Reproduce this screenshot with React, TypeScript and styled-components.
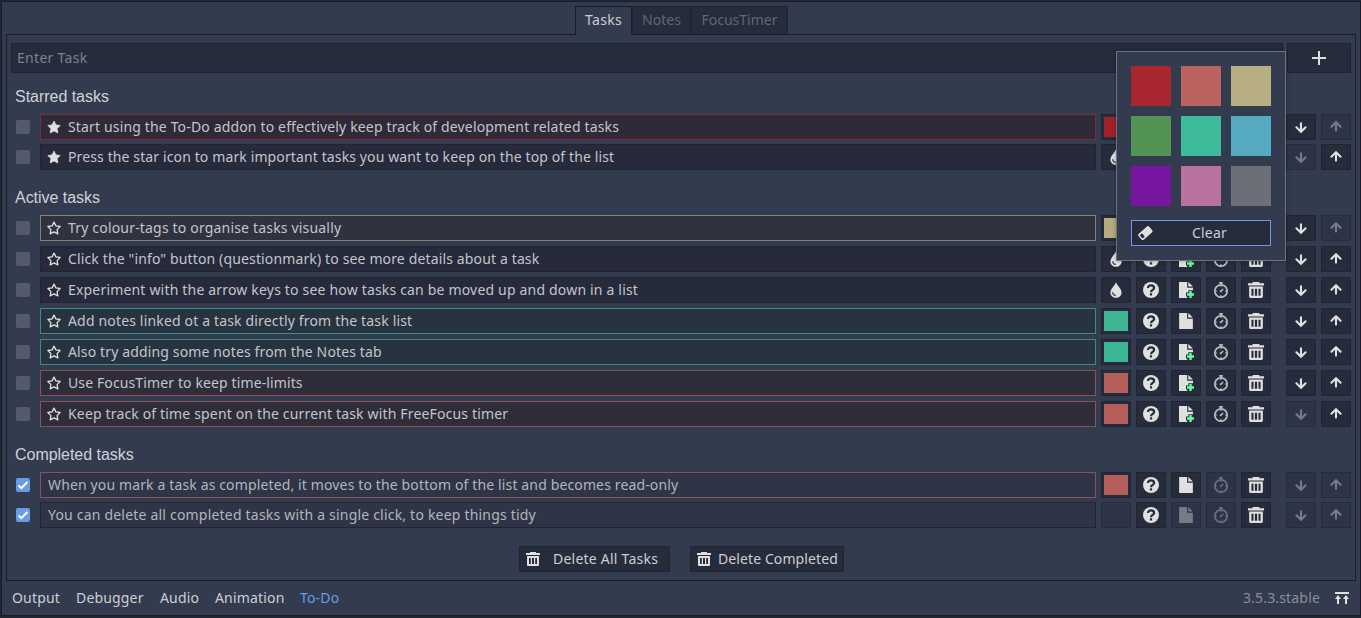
import React from 'react';
import styled, { createGlobalStyle } from 'styled-components';

const GlobalStyle = createGlobalStyle`
  *, *::before, *::after { box-sizing: border-box; }
  body { margin: 0; background: #262c3b; font-family: "Noto Sans", sans-serif; font-size: 14px; color: #cdced3; }
  button, input { font: inherit; color: inherit; }
`;

const Frame = styled.div`
  width: 1361px;
  height: 618px;
  padding: 1px 0 2px 1px;
  background: #222734;
  overflow: hidden;
`;

const Dock = styled.div`
  height: 615px;
  border: 1px solid #191d27;
  background: #333b4e;
  padding: 4px 4px 0 4px;
  display: flex;
  flex-direction: column;
`;

const Tabs = styled.div`
  display: flex;
  justify-content: center;
  height: 29px;
  margin-bottom: -1px;
  margin-right: -1px;
  z-index: 1;
`;

const Tab = styled.div<{ $active?: boolean; $w: number }>`
  width: ${(p) => p.$w}px;
  height: ${(p) => (p.$active ? 29 : 28)}px;
  line-height: 26px;
  text-align: center;
  white-space: nowrap;
  border: 1px solid ${(p) => (p.$active ? '#191d27' : '#202531')};
  border-bottom: 0;
  background: ${(p) => (p.$active ? '#333b4e' : '#262c3b')};
  color: ${(p) => (p.$active ? '#cdced3' : '#62666f')};
  letter-spacing: ${(p) => (p.$active ? 0.3 : 0)}px;
`;

const Panel = styled.main`
  width: 1350px;
  height: 547px;
  border: 1px solid #191d27;
  padding: 8px 4px 0;
`;

const EntryRow = styled.div`
  display: flex;
  gap: 4px;
  height: 30px;
`;

const Entry = styled.input`
  width: 1272px;
  padding: 0 5px 2px;
  border: 1px solid #202531;
  background: #262c3b;
  outline: none;
  letter-spacing: 0.3px;
  &::placeholder { color: #7e828c; opacity: 1; }
`;

const Button = styled.button<{ $w: number; $off?: boolean }>`
  width: ${(p) => p.$w}px;
  flex: none;
  height: 100%;
  padding: 0;
  display: flex;
  align-items: center;
  justify-content: center;
  border: 1px solid ${(p) => (p.$off ? '#262c3b' : '#202531')};
  background: ${(p) => (p.$off ? '#2e3447' : '#262c3b')};
  color: ${(p) => (p.$off ? '#777b86' : '#e0e0e0')};
`;

const Heading = styled.h2<{ $h: number }>`
  height: ${(p) => p.$h}px;
  margin: 0 0 0 4px;
  padding-bottom: 8px;
  display: flex;
  align-items: flex-end;
  font: 400 16px/18px "Liberation Sans", sans-serif;
  letter-spacing: -0.03px;
  color: #d0d2d7;
`;

const List = styled.div<{ $gap: number }>`
  display: flex;
  flex-direction: column;
  gap: ${(p) => p.$gap}px;
`;

const Row = styled.div`
  display: flex;
  align-items: center;
  height: 26px;
  gap: 5px;
  padding-left: 5px;
`;

const Check = styled.span<{ $on?: boolean }>`
  width: 14px;
  height: 14px;
  margin-right: 5px;
  flex: none;
  display: flex;
  border-radius: 2px;
  background: ${(p) => (p.$on ? '#699ce8' : '#545a69')};
`;

const Field = styled.div<{ $line: string; $fill: string; $done?: boolean }>`
  width: 1056px;
  height: 26px;
  flex: none;
  display: flex;
  align-items: center;
  gap: 7px;
  padding-left: ${(p) => (p.$done ? 7 : 6)}px;
  border: 1px solid ${(p) => p.$line};
  background: ${(p) => p.$fill};
  color: ${(p) => (p.$done ? '#b3b5bc' : '#c3c5cb')};
  white-space: nowrap;
`;

const TaskText = styled.span<{ $ls: number }>`
  padding-bottom: 2px;
  letter-spacing: ${(p) => p.$ls}px;
`;

const Swatch = styled.span<{ $c: string }>`
  width: 24px;
  height: 20px;
  background: ${(p) => p.$c};
`;

const Spacer = styled.span`
  width: 5px;
`;

const Actions = styled.div`
  display: flex;
  gap: 20px;
  height: 26px;
  margin: 18px 0 0 508px;
`;

const DeleteButton = styled(Button)<{ $gap: number }>`
  justify-content: flex-start;
  padding-left: 6px;
  gap: ${(p) => p.$gap}px;
  color: #e0e0e0;
  white-space: nowrap;
`;

const Label = styled.span<{ $ls?: number }>`
  padding-bottom: 2px;
  letter-spacing: ${(p) => p.$ls ?? 0}px;
  color: #cdced3;
`;

const BottomBar = styled.footer`
  display: flex;
  align-items: center;
  height: 34px;
  padding: 0 7px 0 6px;
`;

const DockTab = styled.span<{ $w: number; $active?: boolean }>`
  width: ${(p) => p.$w}px;
  padding-bottom: 2px;
  letter-spacing: 0.17px;
  color: ${(p) => (p.$active ? '#699ce8' : '#cdced3')};
`;

const Version = styled.span`
  margin-left: auto;
  margin-right: 15px;
  padding-bottom: 2px;
  letter-spacing: 0.17px;
  color: #8a8e98;
`;

const Popup = styled.div`
  position: absolute;
  left: 1116px;
  top: 51px;
  width: 170px;
  height: 210px;
  padding: 14px;
  border: 1px solid #6e7381;
  background: #333b4e;
  box-shadow: 0 0 4px rgba(0, 0, 0, 0.3);
`;

const Palette = styled.div`
  display: grid;
  grid-template-columns: repeat(3, 40px);
  grid-auto-rows: 40px;
  gap: 10px;
`;

const Tile = styled.span<{ $c: string }>`
  background: ${(p) => p.$c};
`;

const ClearButton = styled.button`
  display: flex;
  align-items: center;
  width: 140px;
  height: 26px;
  margin-top: 14px;
  padding: 0 0 0 6px;
  border: 1px solid #699ce8;
  background: #262c3b;
  color: #e0e0e0;
`;

const ClearLabel = styled(Label)`
  flex: 1;
  text-align: center;
  padding-right: 5px;
`;

const Icon = styled.svg`
  display: block;
  flex: none;
`;

const Star = ({ filled }: { filled?: boolean }) => (
  <Icon width="14" height="14" viewBox="0 0 14 14">
    <path
      d="M7 1.1L8.9 4.9L13.1 5.5L10.1 8.6L10.8 12.9L7 10.9L3.2 12.9L3.9 8.6L0.9 5.5L5.1 4.9Z"
      fill={filled ? '#e0e0e0' : 'none'}
      stroke="#e0e0e0"
      strokeWidth={filled ? 0.8 : 1.3}
      strokeLinejoin="round"
    />
  </Icon>
);

const Arrow = ({ up }: { up?: boolean }) => (
  <Icon width="16" height="16" viewBox="0 0 16 16" fill="none" stroke="currentColor" strokeWidth="2.1" strokeLinecap="round">
    <path d={up ? 'M8 11.6V3.4M3.4 7.7L8 3.2L12.6 7.7' : 'M8 4.4V12.6M3.4 8.3L8 12.8L12.6 8.3'} />
  </Icon>
);

const Plus = () => (
  <Icon width="14" height="14" viewBox="0 0 14 14">
    <path d="M6 0h2v6h6v2H8v6H6V8H0V6h6z" fill="#e0e0e0" />
  </Icon>
);

const Question = () => (
  <Icon width="16" height="16" viewBox="0 0 16 16">
    <circle cx="8" cy="8" r="8" fill="#e0e0e0" />
    <path d="M5 6.1C5 4.2 6.2 3.3 8 3.3S11.1 4.3 11.1 5.9C11.1 7.8 8 7.9 8 10.2" fill="none" stroke="#262c3b" strokeWidth="2.2" />
    <path d="M6.9 11.3h2.2v2.2H6.9z" fill="#262c3b" />
  </Icon>
);

const FileIcon = ({ add }: { add?: boolean }) =>
  add ? (
    <Icon width="16" height="16" viewBox="0 0 16 16">
      <path d="M1 0v16h8.2v-1.6H8v-4h2.3V8.2H15V5.8H9.2V0zM10.3 0v4.6H15z" fill="currentColor" />
      <path d="M11.3 9h2.4v2.3H16v2.4h-2.3V16h-2.4v-2.3H9v-2.4h2.3z" fill="#5fff97" />
    </Icon>
  ) : (
    <Icon width="16" height="16" viewBox="1 1 14 14">
      <path d="M2 1v14h12V6H9V1zM10 1v4h4z" fill="currentColor" />
    </Icon>
  );

const Stopwatch = ({ off }: { off?: boolean }) => (
  <Icon width="16" height="16" viewBox="0 0 16 16" fill="none" stroke={off ? '#6a6e7a' : '#b7b9bd'}>
    <circle cx="8" cy="9" r="6.2" strokeWidth="1.8" />
    <path d="M6.2 0.9h3.6M8 1v2.4" strokeWidth="1.8" />
    <path d="M8 3v2M8 13v2M2 9h2M12 9h2" strokeWidth="1" />
    <path d="M7.6 9.5L10.2 7" strokeWidth="1.5" />
    <circle cx="7.8" cy="9.2" r="0.7" strokeWidth="1" />
  </Icon>
);

const Trash = ({ size = 16 }: { size?: number }) => (
  <Icon width={size} height={size} viewBox="1 1 14 14">
    <path
      d="M5 1v1H1v2h14V2h-4V1zM2 5v9a1 1 0 0 0 1 1h10a1 1 0 0 0 1-1V5zm2 2h1.8v6H4zm3 0h2v6H7zm3.2 0H12v6h-1.8z"
      fill="#e0e0e0"
      fillRule="evenodd"
    />
  </Icon>
);

const Drop = () => (
  <Icon width="16" height="16" viewBox="0 0 16 16">
    <path d="M8 0.2C9.2 3.4 13.6 6.8 13.6 10.5C13.6 13.6 11.1 15.8 8 15.8S2.4 13.6 2.4 10.5C2.4 6.8 6.8 3.4 8 0.2Z" fill="#e0e0e0" />
    <path d="M4.6 10.3C4.8 12.3 6 13.4 7.8 13.5" fill="none" stroke="#3a4050" strokeWidth="1.3" />
  </Icon>
);

const Eraser = () => (
  <Icon width="16" height="14" viewBox="0 0 16 14">
    <g transform="rotate(-42 7.5 7)">
      <rect x="0.2" y="3.1" width="14.2" height="7.8" rx="1.8" fill="#e0e0e0" />
      <rect x="1.7" y="4.7" width="2.9" height="4.6" rx="0.8" fill="#262c3b" />
    </g>
  </Icon>
);

const Tick = () => (
  <Icon width="14" height="14" viewBox="0 0 14 14">
    <path d="M2.5 7.5L5.3 10.2L11.5 4" fill="none" stroke="#fff" strokeWidth="2" />
  </Icon>
);

const ExpandDock = () => (
  <Icon width="14" height="14" viewBox="0 0 14 14">
    <path d="M0 1h14v2H0zM3 4l3 4H4v5H2V8H0zM11 4l3 4h-2v5h-2V8H8z" fill="#e0e0e0" />
  </Icon>
);

type Tag = 'red' | 'sand' | 'green' | 'coral' | 'none';

const tags: Record<Tag, { line: string; fill: string; chip: string }> = {
  red: { line: '#842b3a', fill: '#2e2a38', chip: '#a52129' },
  sand: { line: '#85826f', fill: '#30333f', chip: '#b5ab7f' },
  green: { line: '#359080', fill: '#273440', chip: '#3bb592' },
  coral: { line: '#8c525a', fill: '#2f2d3a', chip: '#b55f5d' },
  none: { line: '#202531', fill: '#262a3b', chip: 'transparent' },
};

interface Task {
  text: string;
  tag: Tag;
  ls: number;
  starred?: boolean;
  done?: boolean;
  note?: boolean;
  first?: boolean;
  last?: boolean;
}

const starred: Task[] = [
  { text: 'Start using the To-Do addon to effectively keep track of development related tasks', tag: 'red', ls: 0.155, starred: true, first: true },
  { text: 'Press the star icon to mark important tasks you want to keep on the top of the list', tag: 'none', ls: 0.12, starred: true, last: true },
];

const active: Task[] = [
  { text: 'Try colour-tags to organise tasks visually', tag: 'sand', ls: 0.18, first: true },
  { text: 'Click the "info" button (questionmark) to see more details about a task', tag: 'none', ls: 0.14 },
  { text: 'Experiment with the arrow keys to see how tasks can be moved up and down in a list', tag: 'none', ls: 0.183 },
  { text: 'Add notes linked ot a task directly from the task list', tag: 'green', ls: 0.165, note: true },
  { text: 'Also try adding some notes from the Notes tab', tag: 'green', ls: 0.14 },
  { text: 'Use FocusTimer to keep time-limits', tag: 'coral', ls: 0.12 },
  { text: 'Keep track of time spent on the current task with FreeFocus timer', tag: 'coral', ls: 0.16, last: true },
];

const completed: Task[] = [
  { text: 'When you mark a task as completed, it moves to the bottom of the list and becomes read-only', tag: 'coral', ls: 0.135, done: true, note: true, first: true, last: true },
  { text: 'You can delete all completed tasks with a single click, to keep things tidy', tag: 'none', ls: 0.2, done: true, first: true, last: true },
];

const palette = ['#a8262d', '#ba6361', '#b8ae84', '#539455', '#3fba9a', '#55a9c1', '#7815a1', '#b971a0', '#6c6f78'];

const TaskRow = ({ task }: { task: Task }) => {
  const tag = tags[task.tag];
  const emptyDone = task.done && task.tag === 'none';
  return (
    <Row>
      <Check $on={task.done}>{task.done && <Tick />}</Check>
      <Field $line={tag.line} $fill={task.done ? '#2f3446' : tag.fill} $done={task.done}>
        {!task.done && <Star filled={task.starred} />}
        <TaskText $ls={task.ls}>{task.text}</TaskText>
      </Field>
      <Button $w={30} $off={emptyDone}>
        {task.tag !== 'none' ? <Swatch $c={tag.chip} /> : !task.done && <Drop />}
      </Button>
      <Button $w={30}><Question /></Button>
      <Button $w={30} $off={emptyDone}><FileIcon add={!task.note && !task.done} /></Button>
      <Button $w={30} $off={task.done}><Stopwatch off={task.done} /></Button>
      <Button $w={30}><Trash /></Button>
      <Spacer />
      <Button $w={30} $off={task.last}><Arrow /></Button>
      <Button $w={30} $off={task.first}><Arrow up /></Button>
    </Row>
  );
};

export default function App() {
  return (
    <>
      <GlobalStyle />
      <Frame>
        <Dock>
          <Tabs>
            <Tab $w={57} $active>Tasks</Tab>
            <Tab $w={59}>Notes</Tab>
            <Tab $w={97}>FocusTimer</Tab>
          </Tabs>
          <Panel>
            <EntryRow>
              <Entry placeholder="Enter Task" />
              <Button $w={64}><Plus /></Button>
            </EntryRow>
            <Heading $h={41}>Starred tasks</Heading>
            <List $gap={4}>{starred.map((t) => <TaskRow key={t.text} task={t} />)}</List>
            <Heading $h={45}>Active tasks</Heading>
            <List $gap={5}>{active.map((t) => <TaskRow key={t.text} task={t} />)}</List>
            <Heading $h={45}>Completed tasks</Heading>
            <List $gap={4}>{completed.map((t) => <TaskRow key={t.text} task={t} />)}</List>
            <Actions>
              <DeleteButton $w={151} $gap={13}><Trash size={14} /><Label $ls={0.23}>Delete All Tasks</Label></DeleteButton>
              <DeleteButton $w={154} $gap={7}><Trash size={14} /><Label $ls={0.1}>Delete Completed</Label></DeleteButton>
            </Actions>
          </Panel>
          <BottomBar>
            <DockTab $w={64}>Output</DockTab>
            <DockTab $w={84}>Debugger</DockTab>
            <DockTab $w={55}>Audio</DockTab>
            <DockTab $w={85}>Animation</DockTab>
            <DockTab $w={60} $active>To-Do</DockTab>
            <Version>3.5.3.stable</Version>
            <ExpandDock />
          </BottomBar>
        </Dock>
      </Frame>
      <Popup>
        <Palette>{palette.map((c) => <Tile key={c} $c={c} />)}</Palette>
        <ClearButton><Eraser /><ClearLabel $ls={0.2}>Clear</ClearLabel></ClearButton>
      </Popup>
    </>
  );
}
